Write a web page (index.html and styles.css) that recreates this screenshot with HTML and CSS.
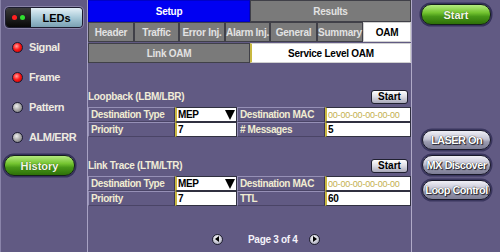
FILE: index.html
```html
<!DOCTYPE html>
<html>
<head>
<meta charset="utf-8">
<link rel="stylesheet" href="styles.css">
</head>
<body>
<div class="left">
  <div class="leds">
    <div class="leds-dots"><span class="dot r"></span><span class="dot g"></span></div>
    <div class="leds-label">LEDs</div>
  </div>
  <div class="led-list">
    <div class="led-item"><span class="led red"></span>Signal</div>
    <div class="led-item"><span class="led red"></span>Frame</div>
    <div class="led-item"><span class="led grey"></span>Pattern</div>
    <div class="led-item"><span class="led grey"></span>ALM/ERR</div>
  </div>
  <div class="btn-green history">History</div>
</div>

<div class="main">
  <div class="tabs row1">
    <div class="tab blue w162">Setup</div>
    <div class="tab w161">Results</div>
  </div>
  <div class="tabs row2">
    <div class="tab" style="width:46px">Header</div>
    <div class="tab" style="width:45px">Traffic</div>
    <div class="tab" style="width:46px">Error Inj.</div>
    <div class="tab" style="width:45px">Alarm Inj.</div>
    <div class="tab" style="width:47px">General</div>
    <div class="tab" style="width:46px">Summary</div>
    <div class="tab white" style="width:48px">OAM</div>
  </div>
  <div class="tabs row3">
    <div class="tab w162">Link OAM</div>
    <div class="tab white sel w161">Service Level OAM</div>
  </div>

  <div class="section first">
    <div class="sec-head">
      <span class="sec-title">Loopback (LBM/LBR)</span>
      <span class="btn-small">Start</span>
    </div>
    <div class="grid">
      <div class="cell label">Destination Type</div>
      <div class="cell input">MEP<span class="tri"></span></div>
      <div class="cell label">Destination MAC</div>
      <div class="cell input mac">00-00-00-00-00-00</div>
      <div class="cell label">Priority</div>
      <div class="cell input">7</div>
      <div class="cell label"># Messages</div>
      <div class="cell input">5</div>
    </div>
  </div>

  <div class="section second">
    <div class="sec-head">
      <span class="sec-title">Link Trace (LTM/LTR)</span>
      <span class="btn-small">Start</span>
    </div>
    <div class="grid">
      <div class="cell label">Destination Type</div>
      <div class="cell input">MEP<span class="tri"></span></div>
      <div class="cell label">Destination MAC</div>
      <div class="cell input mac">00-00-00-00-00-00</div>
      <div class="cell label">Priority</div>
      <div class="cell input">7</div>
      <div class="cell label">TTL</div>
      <div class="cell input">60</div>
    </div>
  </div>

  <div class="pager">
    <span class="circ"><span class="arrow-l"></span></span>
    <span class="page-text">Page 3 of 4</span>
    <span class="circ"><span class="arrow-r"></span></span>
  </div>
</div>

<div class="right">
  <div class="btn-green start">Start</div>
  <div class="btn-grey first-grey">LASER On</div>
  <div class="btn-grey">MX Discover</div>
  <div class="btn-grey">Loop Control</div>
</div>
</body>
</html>
```
FILE: styles.css
```css
* { box-sizing: border-box; margin: 0; padding: 0; }
html, body { width: 500px; height: 252px; overflow: hidden; }
body {
  background: #615a83;
  font-family: "Liberation Sans", Arial, sans-serif;
  font-weight: bold;
  display: flex;
}

/* Left panel */
.left {
  width: 88px;
  height: 252px;
  border-left: 1px solid #8a84aa;
  border-right: 1px solid #a8a2c4;
  padding: 7px 0 0 4px;
  display: flex;
  flex-direction: column;
}
.leds {
  display: flex;
  width: 78px;
  height: 21px;
  border: 1px solid #1c1c30;
  border-radius: 4px;
  overflow: hidden;
  box-shadow: 0 0 0 1px #8a84a8;
}
.leds-dots {
  width: 25px;
  background: linear-gradient(#3a3a3a, #080808);
  display: flex;
  align-items: center;
  justify-content: center;
  gap: 3px;
}
.dot { width: 5px; height: 5px; border-radius: 50%; }
.dot.r { background: #ff2020; }
.dot.g { background: #30e030; }
.leds-label {
  flex: 1;
  background: linear-gradient(#e4f0f6, #a8cad8 50%, #7aa0b2);
  color: #000;
  font-size: 11px;
  display: flex;
  align-items: center;
  justify-content: center;
}
.led-list { margin-top: 4px; display: flex; flex-direction: column; }
.led-item {
  height: 30px;
  display: flex;
  align-items: center;
  gap: 6px;
  padding-left: 7px;
  color: #eeeae0;
  font-size: 11px;
  letter-spacing: -0.4px;
}
.led {
  width: 11px;
  height: 11px;
  border-radius: 50%;
  border: 1.5px solid #1a1a30;
  flex: none;
}
.led.red { background: radial-gradient(circle at 40% 35%, #ffa0a0, #ff1818 45%, #b00000); }
.led.grey { background: radial-gradient(circle at 40% 35%, #eeeeee, #a8a8a8 50%, #6a6a6a); }

.btn-green {
  height: 21px;
  border-radius: 10px;
  border: 1px solid #14201a;
  box-shadow: 0 0 0 1.5px #34305a;
  background: linear-gradient(#b4ea80, #74c430 40%, #489818 60%, #2e7008);
  color: #f4f8e8;
  font-size: 11px;
  display: flex;
  align-items: center;
  justify-content: center;
  text-shadow: 0 0 1px #1a4000;
}
.history { width: 71px; margin: 3px 0 0 -1px; }

/* Main */
.main {
  width: 324px;
  height: 252px;
  border-right: 1px solid #b0aac8;
  display: flex;
  flex-direction: column;
}
.tabs { display: flex; }
.row1 { height: 22px; }
.row2 { height: 20px; margin-bottom: 1px; }
.row3 { height: 20px; }
.w162 { width: 162px; }
.w161 { width: 161px; }
.tab {
  border: 1px solid #404048;
  background: #7a7a7a;
  color: #e2e2e2;
  font-size: 10px;
  letter-spacing: -0.25px;
  display: flex;
  align-items: center;
  justify-content: center;
  white-space: nowrap;
}
.tab.blue { background: #0000f2; color: #fff; border-color: #0000c8; }
.tab.white { background: #fff; color: #000; border-color: #d0d0d0; }
.tab.sel { border-left: 2px solid #c8b840; }

.section.first { margin-top: 25px; }
.section.second { margin-top: 20px; }
.sec-head {
  height: 17px;
  display: flex;
  align-items: center;
  justify-content: space-between;
  padding-right: 3px;
}
.sec-title { color: #f0ecd8; font-size: 10px; letter-spacing: -0.3px; }
.btn-small {
  width: 37px;
  height: 14px;
  border: 1px solid #202030;
  border-radius: 3px;
  background: linear-gradient(#ffffff, #dcdce4 50%, #a8a8b8);
  font-size: 10px;
  color: #000;
  display: flex;
  align-items: center;
  justify-content: center;
}
.grid {
  margin-top: 2px;
  display: grid;
  grid-template-columns: 87px 62px 88px 86px;
  grid-auto-rows: 15px;
}
.cell {
  display: flex;
  align-items: center;
  font-size: 10px;
  letter-spacing: -0.4px;
  white-space: nowrap;
  overflow: hidden;
}
.cell.label {
  border: 1px solid #9690b6;
  border-right-color: #3c3656;
  border-bottom-color: #4a4466;
  color: #f0ecd2;
  padding-left: 2px;
}
.cell.input {
  background: #fff;
  color: #000;
  border: 1px solid #303040;
  border-left: 2px solid #c8b840;
  padding-left: 1px;
}
.cell.mac {
  color: #c4b050;
  font-weight: normal;
  font-size: 9px;
  letter-spacing: -0.2px;
}
.tri {
  margin-left: auto;
  margin-right: 1px;
  width: 0;
  height: 0;
  border-left: 5px solid transparent;
  border-right: 5px solid transparent;
  border-top: 10px solid #000;
}

.pager {
  margin-top: auto;
  margin-bottom: 7px;
  height: 12px;
  display: flex;
  align-items: center;
  padding-left: 124px;
}
.circ {
  width: 11px;
  height: 11px;
  border-radius: 50%;
  border: 1px solid #202030;
  background: radial-gradient(circle at 45% 35%, #ffffff, #c8c8d4 55%, #8a8aa0);
  display: flex;
  align-items: center;
  justify-content: center;
}
.arrow-l { width: 0; height: 0; border-top: 3px solid transparent; border-bottom: 3px solid transparent; border-right: 4px solid #000; margin-right: 1px; }
.arrow-r { width: 0; height: 0; border-top: 3px solid transparent; border-bottom: 3px solid transparent; border-left: 4px solid #000; margin-left: 1px; }
.page-text {
  color: #f4f2fa;
  font-size: 10px;
  letter-spacing: -0.3px;
  margin: 0 11px 0 25px;
}

/* Right panel */
.right {
  width: 88px;
  height: 252px;
  display: flex;
  flex-direction: column;
  padding: 4px 0 0 9px;
}
.start { width: 70px; }
.btn-grey {
  width: 69px;
  height: 20px;
  margin-left: 1px;
  margin-bottom: 5px;
  border-radius: 10px;
  border: 1px solid #181828;
  box-shadow: 0 0 0 1.5px #3a365e;
  background: linear-gradient(#f0f0f6, #c4c4d4 45%, #9c9cb0 60%, #7c7c94);
  color: #fff;
  font-size: 11px;
  letter-spacing: -0.55px;
  display: flex;
  align-items: center;
  justify-content: center;
  white-space: nowrap;
  text-shadow: 0 0 1px #000, 1px 1px 1px #202030;
}
.first-grey { margin-top: 105px; }
```
